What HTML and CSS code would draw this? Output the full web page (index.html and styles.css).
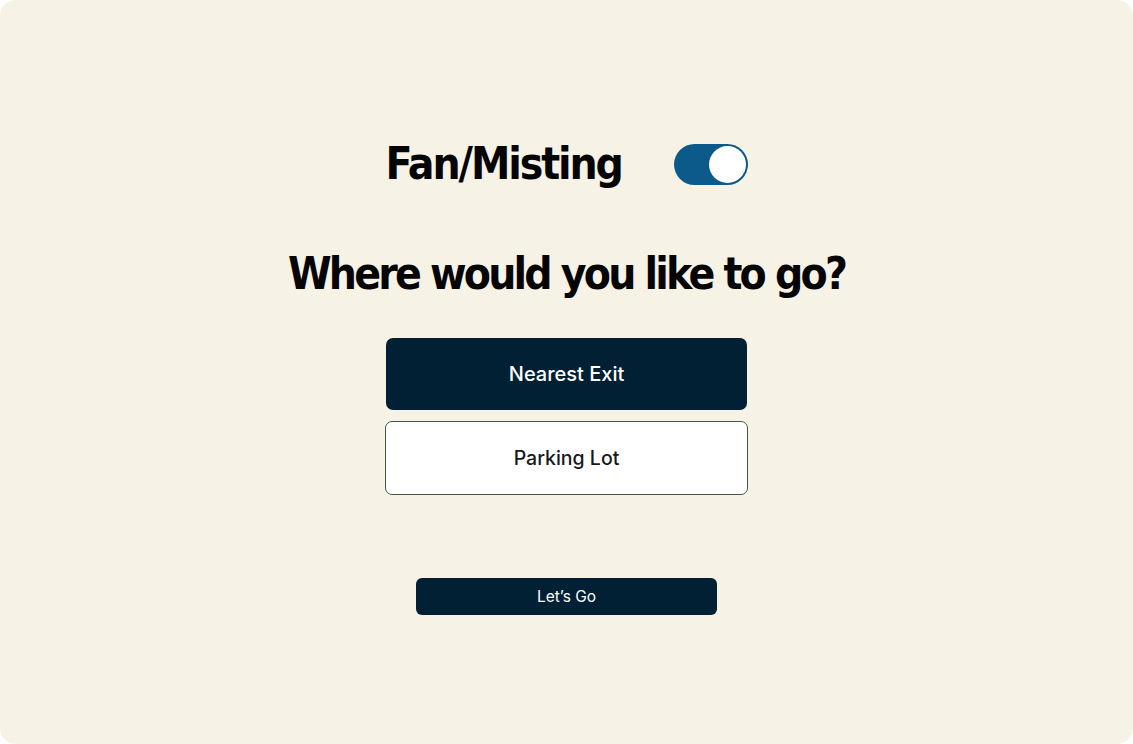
FILE: index.html
```html
<!DOCTYPE html>
<html>
<head>
<meta charset="utf-8">
<link rel="stylesheet" href="styles.css">
</head>
<body>
<main class="screen">
  <div class="mode-row">
    <span class="mode-label">Fan/Misting</span>
    <span class="toggle"><span class="knob"></span></span>
  </div>
  <h1 class="question">Where would you like to go?</h1>
  <div class="choices">
    <button class="choice choice-active">Nearest Exit</button>
    <button class="choice">Parking Lot</button>
  </div>
  <button class="go">Let’s Go</button>
</main>
</body>
</html>
```
FILE: styles.css
```css
html, body {
  margin: 0;
  padding: 0;
  background: #ffffff;
}
.screen {
  box-sizing: border-box;
  width: 1133px;
  height: 744px;
  background: #f6f2e6;
  border-radius: 16px;
  display: flex;
  flex-direction: column;
  align-items: center;
  padding-top: 138px;
}
.mode-row {
  display: flex;
  align-items: center;
  justify-content: space-between;
  width: 362px;
  height: 52px;
}
.mode-label {
  font-family: "DejaVu Sans Condensed", "DejaVu Sans", sans-serif;
  font-weight: 700;
  font-size: 44px;
  letter-spacing: -2.1px;
  color: #050505;
  line-height: 52px;
}
.toggle {
  flex-shrink: 0;
  width: 74px;
  height: 41px;
  border-radius: 21px;
  background: #0c5a89;
  display: flex;
  align-items: center;
  justify-content: flex-end;
  padding: 0 2px;
  box-sizing: border-box;
}
.knob {
  width: 37px;
  height: 37px;
  border-radius: 50%;
  background: #ffffff;
}
.question {
  margin: 56px 0 0;
  font-family: "DejaVu Sans Condensed", "DejaVu Sans", sans-serif;
  font-weight: 700;
  font-size: 44px;
  letter-spacing: -2.8px;
  line-height: 56px;
  color: #050505;
}
.choices {
  margin-top: 36px;
  display: flex;
  flex-direction: column;
  align-items: center;
  gap: 11px;
}
.choice {
  box-sizing: border-box;
  width: 363px;
  height: 74px;
  border: 1px solid #3f5a3c;
  border-radius: 7px;
  background: #ffffff;
  color: #16191c;
  font-family: Inter, "Noto Sans", sans-serif;
  font-weight: 500;
  font-size: 19.5px;
  cursor: pointer;
}
.choice-active {
  width: 361px;
  height: 72px;
  border: none;
  background: #012034;
  color: #ffffff;
  font-size: 20px;
}
.go {
  margin-top: 83px;
  width: 301px;
  height: 37px;
  border: none;
  border-radius: 6px;
  background: #012034;
  color: #ffffff;
  font-family: Inter, "Noto Sans", sans-serif;
  font-weight: 400;
  font-size: 15.5px;
}
```
